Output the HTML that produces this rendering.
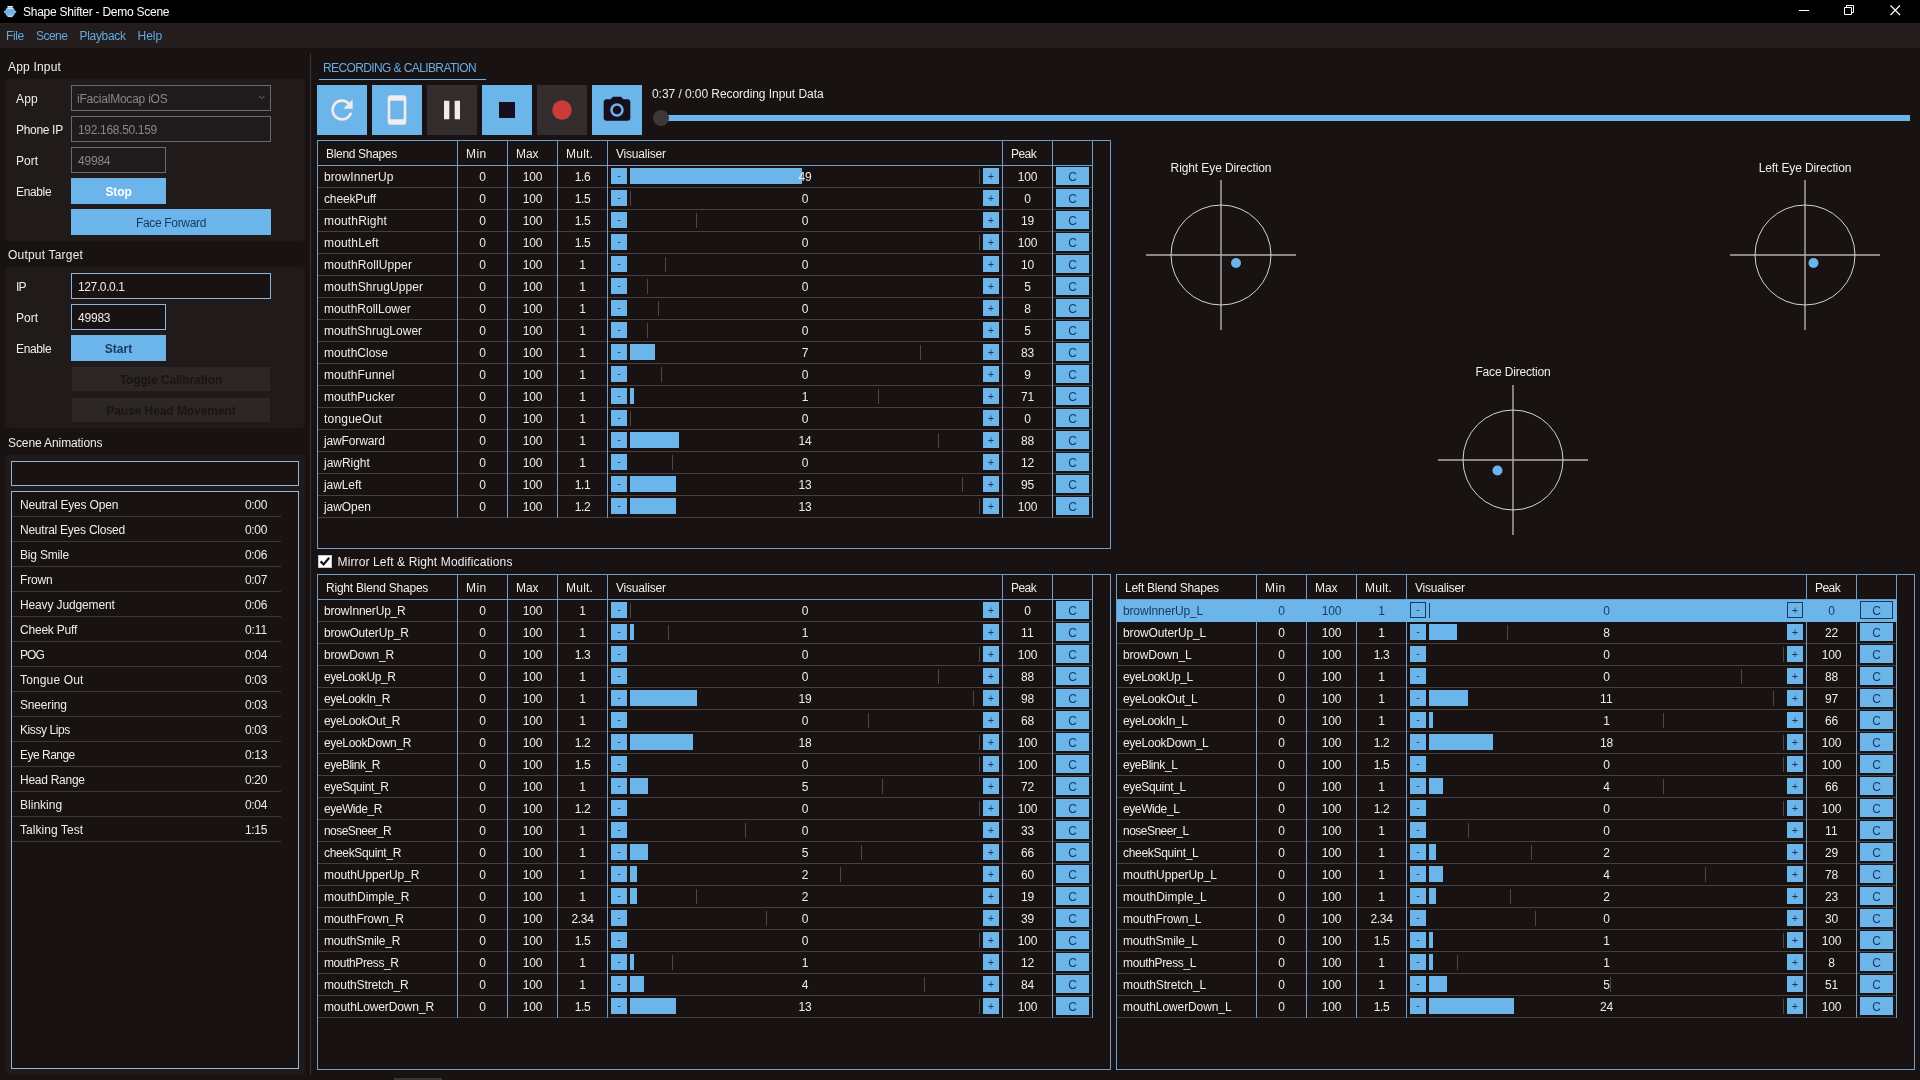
<!DOCTYPE html>
<html lang="en"><head><meta charset="utf-8"><title>Shape Shifter - Demo Scene</title>
<style>

html,body{margin:0;padding:0;}
body{width:1920px;height:1080px;overflow:hidden;background:#181212;color:#f1ecec;
 font-family:"Liberation Sans",sans-serif;font-size:12px;position:relative;}
div,span,svg{position:absolute;box-sizing:border-box;}
.x{white-space:nowrap;line-height:16px;height:16px;}
.g{background:#201a1a;border-radius:5px;}
.b{background:#6cb5ea;}
.nv{color:#17395f;}
.bd{font-weight:bold;}
.in{border:1px solid #8fb6d8;background:#181212;}
.ind{border:1px solid #626c78;background:#201a1a;}
.gt{color:#8b8686;}
.tb{border:1px solid #6e9fca;}
.cl{width:1px;background:#6e9fca;top:0;}
.hl{height:1px;background:#6e9fca;left:0;}
.r{left:0;height:22px;border-bottom:1px solid #453f3f;}
.r .x{top:3px;}
.n{left:6px;}
.ce{text-align:center;}
.k{top:2px;width:16px;height:16px;background:#6cb5ea;color:#17395f;text-align:center;line-height:15px;font-size:11px;}
.cb{top:1px;width:33px;height:18px;background:#6cb5ea;color:#17395f;text-align:center;line-height:20px;}
.kp{line-height:17px;}
.f{top:2px;height:16px;background:#6cb5ea;}
.pk{top:3px;width:1px;height:15px;background:#4c4646;}
.sel{background:#6cb5ea;color:#17395f;border-bottom-color:#6cb5ea;}
.sel .k,.sel .cb{border:1px solid #17395f;line-height:13px;}
.sel .cb{line-height:18px;}
.sel .kp{line-height:15px;}
.sel .pk{background:#17395f;}
.sr{left:0;width:269px;height:25px;border-bottom:1px solid #3d3737;}

</style></head><body>
<div id="app" style="left:0;top:0;width:1920px;height:1080px;will-change:transform">
<div style="left:0px;top:0px;width:1920px;height:23px;background:#000"></div>
<svg style="left:3px;top:5px" width="15" height="13" viewBox="3 5 15 13"><circle cx="5" cy="11.8" r="1.1" fill="#9fc4e2"/><circle cx="15.2" cy="11.8" r="1.1" fill="#9fc4e2"/><ellipse cx="10.1" cy="11.9" rx="5" ry="5.3" fill="#7cb6e2"/><rect x="7.2" y="5.9" width="5.8" height="1.4" rx="0.6" fill="#e6eef5"/><rect x="7.6" y="8" width="5" height="1" rx="0.5" fill="#cfe4f3"/><circle cx="7.9" cy="11.6" r="0.7" fill="#4d86b6"/><circle cx="11.9" cy="11.6" r="0.7" fill="#4d86b6"/><ellipse cx="10.1" cy="16.2" rx="2.6" ry="0.9" fill="#b4d2ea"/></svg>
<span class="x" style="left:23px;top:3.5px;letter-spacing:-0.25px;color:#fff">Shape Shifter - Demo Scene</span>
<svg style="left:1790px;top:0" width="130" height="23" viewBox="0 0 130 23" fill="none" stroke="#fff" stroke-width="1"><path d="M9 10.5h10"/><path d="M54.5 7.5h7v7h-7z"/><path d="M56.5 7.5v-2h7v7h-2"/><path d="M100.5 5.5l9.5 9.5M110 5.5l-9.5 9.5" stroke-width="1.2"/></svg>
<div style="left:0px;top:23px;width:1920px;height:25px;background:#231d1d"></div>
<span class="x" style="left:6px;top:27.5px;letter-spacing:-0.35px;color:#64a9de">File</span>
<span class="x" style="left:36px;top:27.5px;letter-spacing:-0.55px;color:#64a9de">Scene</span>
<span class="x" style="left:79.5px;top:27.5px;letter-spacing:-0.32px;color:#64a9de">Playback</span>
<span class="x" style="left:137.5px;top:27.5px;color:#64a9de">Help</span>
<span class="x" style="left:8px;top:58.5px;letter-spacing:0.18px;">App Input</span>
<div class="g" style="left:5px;top:79px;width:300px;height:162px;"></div>
<span class="x" style="left:16px;top:91px;letter-spacing:0.17px;">App</span>
<span class="x" style="left:16px;top:121.5px;letter-spacing:-0.32px;">Phone IP</span>
<span class="x" style="left:16px;top:152.5px;">Port</span>
<span class="x" style="left:16px;top:183.5px;letter-spacing:-0.36px;">Enable</span>
<div class="ind" style="left:71px;top:85px;width:200px;height:26px;"></div>
<span class="x gt" style="left:77px;top:90.5px;letter-spacing:-0.22px;">iFacialMocap iOS</span>
<svg style="left:258px;top:94px" width="8" height="6" viewBox="0 0 8 6" fill="none" stroke="#807a7a" stroke-width="0.9"><path d="M1.2 1.8l2.7 2.7 2.7-2.7"/></svg>
<div class="ind" style="left:71px;top:116px;width:200px;height:26px;"></div>
<span class="x gt" style="left:78px;top:121.5px;letter-spacing:-0.32px;">192.168.50.159</span>
<div class="ind" style="left:71px;top:147px;width:95px;height:26px;"></div>
<span class="x gt" style="left:78px;top:152.5px;letter-spacing:-0.21px;">49984</span>
<div class="b" style="left:71px;top:178px;width:95px;height:26px;"></div>
<span class="x bd" style="left:-31.5px;width:300px;text-align:center;top:183.5px;letter-spacing:-0.12px;color:#fff">Stop</span>
<div class="b" style="left:71px;top:209px;width:200px;height:26px;"></div>
<span class="x nv" style="left:21px;width:300px;text-align:center;top:214.5px;letter-spacing:-0.32px;">Face Forward</span>
<span class="x" style="left:8px;top:246.5px;letter-spacing:0.20px;">Output Target</span>
<div class="g" style="left:5px;top:267px;width:300px;height:161px;"></div>
<span class="x" style="left:16px;top:278.5px;letter-spacing:-0.71px;">IP</span>
<span class="x" style="left:16px;top:309.5px;">Port</span>
<span class="x" style="left:16px;top:340.5px;letter-spacing:-0.36px;">Enable</span>
<div class="in" style="left:71px;top:273px;width:200px;height:26px;"></div>
<span class="x" style="left:78px;top:278.5px;letter-spacing:-0.38px;">127.0.0.1</span>
<div class="in" style="left:71px;top:304px;width:95px;height:26px;"></div>
<span class="x" style="left:78px;top:309.5px;letter-spacing:-0.21px;">49983</span>
<div class="b" style="left:71px;top:335px;width:95px;height:26px;"></div>
<span class="x nv bd" style="left:-31.5px;width:300px;text-align:center;top:340.5px;letter-spacing:0.03px;">Start</span>
<div style="left:72px;top:367px;width:198px;height:24px;background:#2c2626"></div>
<span class="x bd" style="left:21px;width:300px;text-align:center;top:371.5px;letter-spacing:-0.11px;color:#1a1414">Toggle Calibration</span>
<div style="left:72px;top:398px;width:198px;height:24px;background:#2c2626"></div>
<span class="x bd" style="left:21px;width:300px;text-align:center;top:402.5px;letter-spacing:-0.06px;color:#1a1414">Pause Head Movement</span>
<span class="x" style="left:8px;top:434.5px;letter-spacing:-0.10px;">Scene Animations</span>
<div class="g" style="left:5px;top:455px;width:300px;height:620px;"></div>
<div class="in" style="left:11px;top:461px;width:288px;height:25px;"></div>
<div class="in" style="left:11px;top:491px;width:288px;height:578px">
<div class="sr" style="top:0px"><span class="x" style="left:8px;top:5px;letter-spacing:-0.19px;">Neutral Eyes Open</span><span class="x" style="left:233px;top:5px;letter-spacing:-0.34px;">0:00</span></div>
<div class="sr" style="top:25px"><span class="x" style="left:8px;top:5px;letter-spacing:-0.24px;">Neutral Eyes Closed</span><span class="x" style="left:233px;top:5px;letter-spacing:-0.34px;">0:00</span></div>
<div class="sr" style="top:50px"><span class="x" style="left:8px;top:5px;letter-spacing:-0.19px;">Big Smile</span><span class="x" style="left:233px;top:5px;letter-spacing:-0.34px;">0:06</span></div>
<div class="sr" style="top:75px"><span class="x" style="left:8px;top:5px;letter-spacing:-0.16px;">Frown</span><span class="x" style="left:233px;top:5px;letter-spacing:-0.34px;">0:07</span></div>
<div class="sr" style="top:100px"><span class="x" style="left:8px;top:5px;letter-spacing:-0.13px;">Heavy Judgement</span><span class="x" style="left:233px;top:5px;letter-spacing:-0.34px;">0:06</span></div>
<div class="sr" style="top:125px"><span class="x" style="left:8px;top:5px;letter-spacing:-0.21px;">Cheek Puff</span><span class="x" style="left:233px;top:5px;letter-spacing:-0.11px;">0:11</span></div>
<div class="sr" style="top:150px"><span class="x" style="left:8px;top:5px;letter-spacing:-0.89px;">POG</span><span class="x" style="left:233px;top:5px;letter-spacing:-0.34px;">0:04</span></div>
<div class="sr" style="top:175px"><span class="x" style="left:8px;top:5px;letter-spacing:0.14px;">Tongue Out</span><span class="x" style="left:233px;top:5px;letter-spacing:-0.34px;">0:03</span></div>
<div class="sr" style="top:200px"><span class="x" style="left:8px;top:5px;letter-spacing:-0.17px;">Sneering</span><span class="x" style="left:233px;top:5px;letter-spacing:-0.34px;">0:03</span></div>
<div class="sr" style="top:225px"><span class="x" style="left:8px;top:5px;letter-spacing:-0.42px;">Kissy Lips</span><span class="x" style="left:233px;top:5px;letter-spacing:-0.34px;">0:03</span></div>
<div class="sr" style="top:250px"><span class="x" style="left:8px;top:5px;letter-spacing:-0.51px;">Eye Range</span><span class="x" style="left:233px;top:5px;letter-spacing:-0.34px;">0:13</span></div>
<div class="sr" style="top:275px"><span class="x" style="left:8px;top:5px;letter-spacing:-0.27px;">Head Range</span><span class="x" style="left:233px;top:5px;letter-spacing:-0.34px;">0:20</span></div>
<div class="sr" style="top:300px"><span class="x" style="left:8px;top:5px;letter-spacing:0.02px;">Blinking</span><span class="x" style="left:233px;top:5px;letter-spacing:-0.34px;">0:04</span></div>
<div class="sr" style="top:325px"><span class="x" style="left:8px;top:5px;letter-spacing:0.05px;">Talking Test</span><span class="x" style="left:233px;top:5px;letter-spacing:-0.34px;">1:15</span></div>
</div>
<div style="left:310px;top:53px;width:1px;height:1022px;background:#3a3434"></div>
<div style="left:394px;top:1078px;width:48px;height:2px;background:#3a3535"></div>
<span class="x" style="left:323px;top:59.5px;letter-spacing:-0.61px;color:#68aee2">RECORDING &amp; CALIBRATION</span>
<div style="left:319px;top:79px;width:167px;height:1px;background:#6cb5ea"></div>
<div style="left:317px;top:85px;width:50px;height:50px;background:#6cb5ea"><svg style="left:9px;top:9px" width="32" height="32" viewBox="0 0 24 24"><path fill="#f1ebeb" d="M17.65 6.35C16.2 4.9 14.21 4 12 4c-4.42 0-7.99 3.58-7.99 8s3.57 8 7.99 8c3.73 0 6.84-2.55 7.73-6h-2.08c-.82 2.33-3.04 4-5.65 4-3.31 0-6-2.69-6-6s2.69-6 6-6c1.66 0 3.14.69 4.22 1.78L13 11h7V4l-2.35 2.35z"/></svg></div>
<div style="left:372px;top:85px;width:50px;height:50px;background:#6cb5ea"><svg style="left:9px;top:9px" width="32" height="32" viewBox="0 0 24 24"><path fill="#f1ebeb" d="M17 1.01L7 1c-1.1 0-2 .9-2 2v18c0 1.1.9 2 2 2h10c1.1 0 2-.9 2-2V3c0-1.1-.9-1.99-2-1.99zM17 19H7V5h10v14z"/></svg></div>
<div style="left:427px;top:85px;width:50px;height:50px;background:#332d2d"><svg style="left:9px;top:9px" width="32" height="32" viewBox="0 0 24 24"><path fill="#f1ebeb" d="M6 19h4V5H6v14zm8-14v14h4V5h-4z"/></svg></div>
<div style="left:482px;top:85px;width:50px;height:50px;background:#6cb5ea"><svg style="left:9px;top:9px" width="32" height="32" viewBox="0 0 24 24"><path fill="#160e1c" d="M6 6h12v12H6z"/></svg></div>
<div style="left:537px;top:85px;width:50px;height:50px;background:#332d2d"><svg style="left:9px;top:9px" width="32" height="32" viewBox="0 0 24 24"><circle cx="12" cy="12" r="7.3" fill="#c83c3c"/></svg></div>
<div style="left:592px;top:85px;width:50px;height:50px;background:#6cb5ea"><svg style="left:9px;top:9px" width="32" height="32" viewBox="0 0 24 24"><circle cx="12" cy="12" r="3.2" fill="#160e1c"/><path fill="#160e1c" d="M9 2L7.17 4H4c-1.1 0-2 .9-2 2v12c0 1.1.9 2 2 2h16c1.1 0 2-.9 2-2V6c0-1.1-.9-2-2-2h-3.17L15 2H9zm3 15c-2.76 0-5-2.24-5-5s2.24-5 5-5 5 2.24 5 5-2.24 5-5 5z"/></svg></div>
<span class="x" style="left:652px;top:85.5px;letter-spacing:-0.06px;">0:37 / 0:00 Recording Input Data</span>
<div style="left:661px;top:115px;width:1249px;height:6px;background:#6cb5ea"></div>
<div style="left:653px;top:110px;width:16px;height:16px;background:#3d3737;border-radius:8px"></div>
<div class="tb" style="left:317px;top:140px;width:794px;height:409px">
<span class="x" style="left:8px;top:5px;letter-spacing:-0.32px;">Blend Shapes</span>
<span class="x" style="left:148px;top:5px;letter-spacing:0.38px;">Min</span>
<span class="x" style="left:198px;top:5px;letter-spacing:-0.09px;">Max</span>
<span class="x" style="left:248px;top:5px;letter-spacing:0.23px;">Mult.</span>
<span class="x" style="left:298px;top:5px;letter-spacing:-0.21px;">Visualiser</span>
<span class="x" style="left:693px;top:5px;letter-spacing:-0.57px;">Peak</span>
<div class="r" style="top:25px;width:775px">
<span class="x n" style="letter-spacing:0.07px;">browInnerUp</span>
<span class="x ce" style="left:140px;width:49px;letter-spacing:-0.21px;">0</span>
<span class="x ce" style="left:190px;width:49px;letter-spacing:-0.21px;">100</span>
<span class="x ce" style="left:240px;width:49px;letter-spacing:-0.38px;">1.6</span>
<div class="k" style="left:293px">-</div>
<div class="f" style="left:312px;width:172px"></div>
<div class="pk" style="left:661px"></div>
<span class="x ce" style="left:312px;width:350px;letter-spacing:-0.21px;">49</span>
<div class="k kp" style="left:665px">+</div>
<span class="x ce" style="left:685px;width:49px;letter-spacing:-0.21px;">100</span>
<div class="cb" style="left:738px">C</div>
</div>
<div class="r" style="top:47px;width:775px">
<span class="x n" style="letter-spacing:-0.14px;">cheekPuff</span>
<span class="x ce" style="left:140px;width:49px;letter-spacing:-0.21px;">0</span>
<span class="x ce" style="left:190px;width:49px;letter-spacing:-0.21px;">100</span>
<span class="x ce" style="left:240px;width:49px;letter-spacing:-0.38px;">1.5</span>
<div class="k" style="left:293px">-</div>
<div class="pk" style="left:312px"></div>
<span class="x ce" style="left:312px;width:350px;letter-spacing:-0.21px;">0</span>
<div class="k kp" style="left:665px">+</div>
<span class="x ce" style="left:685px;width:49px;letter-spacing:-0.21px;">0</span>
<div class="cb" style="left:738px">C</div>
</div>
<div class="r" style="top:69px;width:775px">
<span class="x n" style="letter-spacing:0.17px;">mouthRight</span>
<span class="x ce" style="left:140px;width:49px;letter-spacing:-0.21px;">0</span>
<span class="x ce" style="left:190px;width:49px;letter-spacing:-0.21px;">100</span>
<span class="x ce" style="left:240px;width:49px;letter-spacing:-0.38px;">1.5</span>
<div class="k" style="left:293px">-</div>
<div class="pk" style="left:378px"></div>
<span class="x ce" style="left:312px;width:350px;letter-spacing:-0.21px;">0</span>
<div class="k kp" style="left:665px">+</div>
<span class="x ce" style="left:685px;width:49px;letter-spacing:-0.21px;">19</span>
<div class="cb" style="left:738px">C</div>
</div>
<div class="r" style="top:91px;width:775px">
<span class="x n" style="letter-spacing:0.16px;">mouthLeft</span>
<span class="x ce" style="left:140px;width:49px;letter-spacing:-0.21px;">0</span>
<span class="x ce" style="left:190px;width:49px;letter-spacing:-0.21px;">100</span>
<span class="x ce" style="left:240px;width:49px;letter-spacing:-0.38px;">1.5</span>
<div class="k" style="left:293px">-</div>
<div class="pk" style="left:661px"></div>
<span class="x ce" style="left:312px;width:350px;letter-spacing:-0.21px;">0</span>
<div class="k kp" style="left:665px">+</div>
<span class="x ce" style="left:685px;width:49px;letter-spacing:-0.21px;">100</span>
<div class="cb" style="left:738px">C</div>
</div>
<div class="r" style="top:113px;width:775px">
<span class="x n" style="letter-spacing:0.09px;">mouthRollUpper</span>
<span class="x ce" style="left:140px;width:49px;letter-spacing:-0.21px;">0</span>
<span class="x ce" style="left:190px;width:49px;letter-spacing:-0.21px;">100</span>
<span class="x ce" style="left:240px;width:49px;letter-spacing:-0.21px;">1</span>
<div class="k" style="left:293px">-</div>
<div class="pk" style="left:347px"></div>
<span class="x ce" style="left:312px;width:350px;letter-spacing:-0.21px;">0</span>
<div class="k kp" style="left:665px">+</div>
<span class="x ce" style="left:685px;width:49px;letter-spacing:-0.21px;">10</span>
<div class="cb" style="left:738px">C</div>
</div>
<div class="r" style="top:135px;width:775px">
<span class="x n" style="letter-spacing:0.07px;">mouthShrugUpper</span>
<span class="x ce" style="left:140px;width:49px;letter-spacing:-0.21px;">0</span>
<span class="x ce" style="left:190px;width:49px;letter-spacing:-0.21px;">100</span>
<span class="x ce" style="left:240px;width:49px;letter-spacing:-0.21px;">1</span>
<div class="k" style="left:293px">-</div>
<div class="pk" style="left:329px"></div>
<span class="x ce" style="left:312px;width:350px;letter-spacing:-0.21px;">0</span>
<div class="k kp" style="left:665px">+</div>
<span class="x ce" style="left:685px;width:49px;letter-spacing:-0.21px;">5</span>
<div class="cb" style="left:738px">C</div>
</div>
<div class="r" style="top:157px;width:775px">
<span class="x n" style="">mouthRollLower</span>
<span class="x ce" style="left:140px;width:49px;letter-spacing:-0.21px;">0</span>
<span class="x ce" style="left:190px;width:49px;letter-spacing:-0.21px;">100</span>
<span class="x ce" style="left:240px;width:49px;letter-spacing:-0.21px;">1</span>
<div class="k" style="left:293px">-</div>
<div class="pk" style="left:340px"></div>
<span class="x ce" style="left:312px;width:350px;letter-spacing:-0.21px;">0</span>
<div class="k kp" style="left:665px">+</div>
<span class="x ce" style="left:685px;width:49px;letter-spacing:-0.21px;">8</span>
<div class="cb" style="left:738px">C</div>
</div>
<div class="r" style="top:179px;width:775px">
<span class="x n" style="">mouthShrugLower</span>
<span class="x ce" style="left:140px;width:49px;letter-spacing:-0.21px;">0</span>
<span class="x ce" style="left:190px;width:49px;letter-spacing:-0.21px;">100</span>
<span class="x ce" style="left:240px;width:49px;letter-spacing:-0.21px;">1</span>
<div class="k" style="left:293px">-</div>
<div class="pk" style="left:329px"></div>
<span class="x ce" style="left:312px;width:350px;letter-spacing:-0.21px;">0</span>
<div class="k kp" style="left:665px">+</div>
<span class="x ce" style="left:685px;width:49px;letter-spacing:-0.21px;">5</span>
<div class="cb" style="left:738px">C</div>
</div>
<div class="r" style="top:201px;width:775px">
<span class="x n" style="">mouthClose</span>
<span class="x ce" style="left:140px;width:49px;letter-spacing:-0.21px;">0</span>
<span class="x ce" style="left:190px;width:49px;letter-spacing:-0.21px;">100</span>
<span class="x ce" style="left:240px;width:49px;letter-spacing:-0.21px;">1</span>
<div class="k" style="left:293px">-</div>
<div class="f" style="left:312px;width:25px"></div>
<div class="pk" style="left:602px"></div>
<span class="x ce" style="left:312px;width:350px;letter-spacing:-0.21px;">7</span>
<div class="k kp" style="left:665px">+</div>
<span class="x ce" style="left:685px;width:49px;letter-spacing:-0.21px;">83</span>
<div class="cb" style="left:738px">C</div>
</div>
<div class="r" style="top:223px;width:775px">
<span class="x n" style="letter-spacing:0.04px;">mouthFunnel</span>
<span class="x ce" style="left:140px;width:49px;letter-spacing:-0.21px;">0</span>
<span class="x ce" style="left:190px;width:49px;letter-spacing:-0.21px;">100</span>
<span class="x ce" style="left:240px;width:49px;letter-spacing:-0.21px;">1</span>
<div class="k" style="left:293px">-</div>
<div class="pk" style="left:343px"></div>
<span class="x ce" style="left:312px;width:350px;letter-spacing:-0.21px;">0</span>
<div class="k kp" style="left:665px">+</div>
<span class="x ce" style="left:685px;width:49px;letter-spacing:-0.21px;">9</span>
<div class="cb" style="left:738px">C</div>
</div>
<div class="r" style="top:245px;width:775px">
<span class="x n" style="">mouthPucker</span>
<span class="x ce" style="left:140px;width:49px;letter-spacing:-0.21px;">0</span>
<span class="x ce" style="left:190px;width:49px;letter-spacing:-0.21px;">100</span>
<span class="x ce" style="left:240px;width:49px;letter-spacing:-0.21px;">1</span>
<div class="k" style="left:293px">-</div>
<div class="f" style="left:312px;width:4px"></div>
<div class="pk" style="left:560px"></div>
<span class="x ce" style="left:312px;width:350px;letter-spacing:-0.21px;">1</span>
<div class="k kp" style="left:665px">+</div>
<span class="x ce" style="left:685px;width:49px;letter-spacing:-0.21px;">71</span>
<div class="cb" style="left:738px">C</div>
</div>
<div class="r" style="top:267px;width:775px">
<span class="x n" style="letter-spacing:0.21px;">tongueOut</span>
<span class="x ce" style="left:140px;width:49px;letter-spacing:-0.21px;">0</span>
<span class="x ce" style="left:190px;width:49px;letter-spacing:-0.21px;">100</span>
<span class="x ce" style="left:240px;width:49px;letter-spacing:-0.21px;">1</span>
<div class="k" style="left:293px">-</div>
<div class="pk" style="left:312px"></div>
<span class="x ce" style="left:312px;width:350px;letter-spacing:-0.21px;">0</span>
<div class="k kp" style="left:665px">+</div>
<span class="x ce" style="left:685px;width:49px;letter-spacing:-0.21px;">0</span>
<div class="cb" style="left:738px">C</div>
</div>
<div class="r" style="top:289px;width:775px">
<span class="x n" style="letter-spacing:-0.13px;">jawForward</span>
<span class="x ce" style="left:140px;width:49px;letter-spacing:-0.21px;">0</span>
<span class="x ce" style="left:190px;width:49px;letter-spacing:-0.21px;">100</span>
<span class="x ce" style="left:240px;width:49px;letter-spacing:-0.21px;">1</span>
<div class="k" style="left:293px">-</div>
<div class="f" style="left:312px;width:49px"></div>
<div class="pk" style="left:620px"></div>
<span class="x ce" style="left:312px;width:350px;letter-spacing:-0.21px;">14</span>
<div class="k kp" style="left:665px">+</div>
<span class="x ce" style="left:685px;width:49px;letter-spacing:-0.21px;">88</span>
<div class="cb" style="left:738px">C</div>
</div>
<div class="r" style="top:311px;width:775px">
<span class="x n" style="letter-spacing:-0.04px;">jawRight</span>
<span class="x ce" style="left:140px;width:49px;letter-spacing:-0.21px;">0</span>
<span class="x ce" style="left:190px;width:49px;letter-spacing:-0.21px;">100</span>
<span class="x ce" style="left:240px;width:49px;letter-spacing:-0.21px;">1</span>
<div class="k" style="left:293px">-</div>
<div class="pk" style="left:354px"></div>
<span class="x ce" style="left:312px;width:350px;letter-spacing:-0.21px;">0</span>
<div class="k kp" style="left:665px">+</div>
<span class="x ce" style="left:685px;width:49px;letter-spacing:-0.21px;">12</span>
<div class="cb" style="left:738px">C</div>
</div>
<div class="r" style="top:333px;width:775px">
<span class="x n" style="letter-spacing:-0.09px;">jawLeft</span>
<span class="x ce" style="left:140px;width:49px;letter-spacing:-0.21px;">0</span>
<span class="x ce" style="left:190px;width:49px;letter-spacing:-0.21px;">100</span>
<span class="x ce" style="left:240px;width:49px;letter-spacing:-0.38px;">1.1</span>
<div class="k" style="left:293px">-</div>
<div class="f" style="left:312px;width:46px"></div>
<div class="pk" style="left:644px"></div>
<span class="x ce" style="left:312px;width:350px;letter-spacing:-0.21px;">13</span>
<div class="k kp" style="left:665px">+</div>
<span class="x ce" style="left:685px;width:49px;letter-spacing:-0.21px;">95</span>
<div class="cb" style="left:738px">C</div>
</div>
<div class="r" style="top:355px;width:775px">
<span class="x n" style="letter-spacing:-0.07px;">jawOpen</span>
<span class="x ce" style="left:140px;width:49px;letter-spacing:-0.21px;">0</span>
<span class="x ce" style="left:190px;width:49px;letter-spacing:-0.21px;">100</span>
<span class="x ce" style="left:240px;width:49px;letter-spacing:-0.38px;">1.2</span>
<div class="k" style="left:293px">-</div>
<div class="f" style="left:312px;width:46px"></div>
<div class="pk" style="left:661px"></div>
<span class="x ce" style="left:312px;width:350px;letter-spacing:-0.21px;">13</span>
<div class="k kp" style="left:665px">+</div>
<span class="x ce" style="left:685px;width:49px;letter-spacing:-0.21px;">100</span>
<div class="cb" style="left:738px">C</div>
</div>
<div class="hl" style="top:24px;width:775px"></div>
<div class="cl" style="left:139px;height:377px"></div>
<div class="cl" style="left:189px;height:377px"></div>
<div class="cl" style="left:239px;height:377px"></div>
<div class="cl" style="left:289px;height:377px"></div>
<div class="cl" style="left:684px;height:377px"></div>
<div class="cl" style="left:734px;height:377px"></div>
<div class="cl" style="left:774px;height:377px"></div>
</div>
<div style="left:318px;top:555px;width:14px;height:13px;background:#fff;border:1px solid #c8c8c8"><svg style="left:0;top:0" width="12" height="11" viewBox="0 0 12 11" fill="none" stroke="#111" stroke-width="2.2"><path d="M1.6 5.4l3 3 5.6-6.6"/></svg></div>
<span class="x" style="left:337.5px;top:553.5px;letter-spacing:0.13px;">Mirror Left &amp; Right Modifications</span>
<div class="tb" style="left:317px;top:574px;width:794px;height:496px">
<span class="x" style="left:8px;top:5px;letter-spacing:-0.22px;">Right Blend Shapes</span>
<span class="x" style="left:148px;top:5px;letter-spacing:0.38px;">Min</span>
<span class="x" style="left:198px;top:5px;letter-spacing:-0.09px;">Max</span>
<span class="x" style="left:248px;top:5px;letter-spacing:0.23px;">Mult.</span>
<span class="x" style="left:298px;top:5px;letter-spacing:-0.21px;">Visualiser</span>
<span class="x" style="left:693px;top:5px;letter-spacing:-0.57px;">Peak</span>
<div class="r" style="top:25px;width:775px">
<span class="x n" style="letter-spacing:-0.19px;">browInnerUp_R</span>
<span class="x ce" style="left:140px;width:49px;letter-spacing:-0.21px;">0</span>
<span class="x ce" style="left:190px;width:49px;letter-spacing:-0.21px;">100</span>
<span class="x ce" style="left:240px;width:49px;letter-spacing:-0.21px;">1</span>
<div class="k" style="left:293px">-</div>
<div class="pk" style="left:312px"></div>
<span class="x ce" style="left:312px;width:350px;letter-spacing:-0.21px;">0</span>
<div class="k kp" style="left:665px">+</div>
<span class="x ce" style="left:685px;width:49px;letter-spacing:-0.21px;">0</span>
<div class="cb" style="left:738px">C</div>
</div>
<div class="r" style="top:47px;width:775px">
<span class="x n" style="letter-spacing:-0.15px;">browOuterUp_R</span>
<span class="x ce" style="left:140px;width:49px;letter-spacing:-0.21px;">0</span>
<span class="x ce" style="left:190px;width:49px;letter-spacing:-0.21px;">100</span>
<span class="x ce" style="left:240px;width:49px;letter-spacing:-0.21px;">1</span>
<div class="k" style="left:293px">-</div>
<div class="f" style="left:312px;width:4px"></div>
<div class="pk" style="left:350px"></div>
<span class="x ce" style="left:312px;width:350px;letter-spacing:-0.21px;">1</span>
<div class="k kp" style="left:665px">+</div>
<span class="x ce" style="left:685px;width:49px;letter-spacing:0.24px;">11</span>
<div class="cb" style="left:738px">C</div>
</div>
<div class="r" style="top:69px;width:775px">
<span class="x n" style="letter-spacing:-0.20px;">browDown_R</span>
<span class="x ce" style="left:140px;width:49px;letter-spacing:-0.21px;">0</span>
<span class="x ce" style="left:190px;width:49px;letter-spacing:-0.21px;">100</span>
<span class="x ce" style="left:240px;width:49px;letter-spacing:-0.38px;">1.3</span>
<div class="k" style="left:293px">-</div>
<div class="pk" style="left:661px"></div>
<span class="x ce" style="left:312px;width:350px;letter-spacing:-0.21px;">0</span>
<div class="k kp" style="left:665px">+</div>
<span class="x ce" style="left:685px;width:49px;letter-spacing:-0.21px;">100</span>
<div class="cb" style="left:738px">C</div>
</div>
<div class="r" style="top:91px;width:775px">
<span class="x n" style="letter-spacing:-0.42px;">eyeLookUp_R</span>
<span class="x ce" style="left:140px;width:49px;letter-spacing:-0.21px;">0</span>
<span class="x ce" style="left:190px;width:49px;letter-spacing:-0.21px;">100</span>
<span class="x ce" style="left:240px;width:49px;letter-spacing:-0.21px;">1</span>
<div class="k" style="left:293px">-</div>
<div class="pk" style="left:620px"></div>
<span class="x ce" style="left:312px;width:350px;letter-spacing:-0.21px;">0</span>
<div class="k kp" style="left:665px">+</div>
<span class="x ce" style="left:685px;width:49px;letter-spacing:-0.21px;">88</span>
<div class="cb" style="left:738px">C</div>
</div>
<div class="r" style="top:113px;width:775px">
<span class="x n" style="letter-spacing:-0.42px;">eyeLookIn_R</span>
<span class="x ce" style="left:140px;width:49px;letter-spacing:-0.21px;">0</span>
<span class="x ce" style="left:190px;width:49px;letter-spacing:-0.21px;">100</span>
<span class="x ce" style="left:240px;width:49px;letter-spacing:-0.21px;">1</span>
<div class="k" style="left:293px">-</div>
<div class="f" style="left:312px;width:67px"></div>
<div class="pk" style="left:655px"></div>
<span class="x ce" style="left:312px;width:350px;letter-spacing:-0.21px;">19</span>
<div class="k kp" style="left:665px">+</div>
<span class="x ce" style="left:685px;width:49px;letter-spacing:-0.21px;">98</span>
<div class="cb" style="left:738px">C</div>
</div>
<div class="r" style="top:135px;width:775px">
<span class="x n" style="letter-spacing:-0.33px;">eyeLookOut_R</span>
<span class="x ce" style="left:140px;width:49px;letter-spacing:-0.21px;">0</span>
<span class="x ce" style="left:190px;width:49px;letter-spacing:-0.21px;">100</span>
<span class="x ce" style="left:240px;width:49px;letter-spacing:-0.21px;">1</span>
<div class="k" style="left:293px">-</div>
<div class="pk" style="left:550px"></div>
<span class="x ce" style="left:312px;width:350px;letter-spacing:-0.21px;">0</span>
<div class="k kp" style="left:665px">+</div>
<span class="x ce" style="left:685px;width:49px;letter-spacing:-0.21px;">68</span>
<div class="cb" style="left:738px">C</div>
</div>
<div class="r" style="top:157px;width:775px">
<span class="x n" style="letter-spacing:-0.33px;">eyeLookDown_R</span>
<span class="x ce" style="left:140px;width:49px;letter-spacing:-0.21px;">0</span>
<span class="x ce" style="left:190px;width:49px;letter-spacing:-0.21px;">100</span>
<span class="x ce" style="left:240px;width:49px;letter-spacing:-0.38px;">1.2</span>
<div class="k" style="left:293px">-</div>
<div class="f" style="left:312px;width:63px"></div>
<div class="pk" style="left:661px"></div>
<span class="x ce" style="left:312px;width:350px;letter-spacing:-0.21px;">18</span>
<div class="k kp" style="left:665px">+</div>
<span class="x ce" style="left:685px;width:49px;letter-spacing:-0.21px;">100</span>
<div class="cb" style="left:738px">C</div>
</div>
<div class="r" style="top:179px;width:775px">
<span class="x n" style="letter-spacing:-0.48px;">eyeBlink_R</span>
<span class="x ce" style="left:140px;width:49px;letter-spacing:-0.21px;">0</span>
<span class="x ce" style="left:190px;width:49px;letter-spacing:-0.21px;">100</span>
<span class="x ce" style="left:240px;width:49px;letter-spacing:-0.38px;">1.5</span>
<div class="k" style="left:293px">-</div>
<div class="pk" style="left:661px"></div>
<span class="x ce" style="left:312px;width:350px;letter-spacing:-0.21px;">0</span>
<div class="k kp" style="left:665px">+</div>
<span class="x ce" style="left:685px;width:49px;letter-spacing:-0.21px;">100</span>
<div class="cb" style="left:738px">C</div>
</div>
<div class="r" style="top:201px;width:775px">
<span class="x n" style="letter-spacing:-0.39px;">eyeSquint_R</span>
<span class="x ce" style="left:140px;width:49px;letter-spacing:-0.21px;">0</span>
<span class="x ce" style="left:190px;width:49px;letter-spacing:-0.21px;">100</span>
<span class="x ce" style="left:240px;width:49px;letter-spacing:-0.21px;">1</span>
<div class="k" style="left:293px">-</div>
<div class="f" style="left:312px;width:18px"></div>
<div class="pk" style="left:564px"></div>
<span class="x ce" style="left:312px;width:350px;letter-spacing:-0.21px;">5</span>
<div class="k kp" style="left:665px">+</div>
<span class="x ce" style="left:685px;width:49px;letter-spacing:-0.21px;">72</span>
<div class="cb" style="left:738px">C</div>
</div>
<div class="r" style="top:223px;width:775px">
<span class="x n" style="letter-spacing:-0.45px;">eyeWide_R</span>
<span class="x ce" style="left:140px;width:49px;letter-spacing:-0.21px;">0</span>
<span class="x ce" style="left:190px;width:49px;letter-spacing:-0.21px;">100</span>
<span class="x ce" style="left:240px;width:49px;letter-spacing:-0.38px;">1.2</span>
<div class="k" style="left:293px">-</div>
<div class="pk" style="left:661px"></div>
<span class="x ce" style="left:312px;width:350px;letter-spacing:-0.21px;">0</span>
<div class="k kp" style="left:665px">+</div>
<span class="x ce" style="left:685px;width:49px;letter-spacing:-0.21px;">100</span>
<div class="cb" style="left:738px">C</div>
</div>
<div class="r" style="top:245px;width:775px">
<span class="x n" style="letter-spacing:-0.56px;">noseSneer_R</span>
<span class="x ce" style="left:140px;width:49px;letter-spacing:-0.21px;">0</span>
<span class="x ce" style="left:190px;width:49px;letter-spacing:-0.21px;">100</span>
<span class="x ce" style="left:240px;width:49px;letter-spacing:-0.21px;">1</span>
<div class="k" style="left:293px">-</div>
<div class="pk" style="left:427px"></div>
<span class="x ce" style="left:312px;width:350px;letter-spacing:-0.21px;">0</span>
<div class="k kp" style="left:665px">+</div>
<span class="x ce" style="left:685px;width:49px;letter-spacing:-0.21px;">33</span>
<div class="cb" style="left:738px">C</div>
</div>
<div class="r" style="top:267px;width:775px">
<span class="x n" style="letter-spacing:-0.34px;">cheekSquint_R</span>
<span class="x ce" style="left:140px;width:49px;letter-spacing:-0.21px;">0</span>
<span class="x ce" style="left:190px;width:49px;letter-spacing:-0.21px;">100</span>
<span class="x ce" style="left:240px;width:49px;letter-spacing:-0.21px;">1</span>
<div class="k" style="left:293px">-</div>
<div class="f" style="left:312px;width:18px"></div>
<div class="pk" style="left:543px"></div>
<span class="x ce" style="left:312px;width:350px;letter-spacing:-0.21px;">5</span>
<div class="k kp" style="left:665px">+</div>
<span class="x ce" style="left:685px;width:49px;letter-spacing:-0.21px;">66</span>
<div class="cb" style="left:738px">C</div>
</div>
<div class="r" style="top:289px;width:775px">
<span class="x n" style="letter-spacing:-0.10px;">mouthUpperUp_R</span>
<span class="x ce" style="left:140px;width:49px;letter-spacing:-0.21px;">0</span>
<span class="x ce" style="left:190px;width:49px;letter-spacing:-0.21px;">100</span>
<span class="x ce" style="left:240px;width:49px;letter-spacing:-0.21px;">1</span>
<div class="k" style="left:293px">-</div>
<div class="f" style="left:312px;width:7px"></div>
<div class="pk" style="left:522px"></div>
<span class="x ce" style="left:312px;width:350px;letter-spacing:-0.21px;">2</span>
<div class="k kp" style="left:665px">+</div>
<span class="x ce" style="left:685px;width:49px;letter-spacing:-0.21px;">60</span>
<div class="cb" style="left:738px">C</div>
</div>
<div class="r" style="top:311px;width:775px">
<span class="x n" style="letter-spacing:-0.06px;">mouthDimple_R</span>
<span class="x ce" style="left:140px;width:49px;letter-spacing:-0.21px;">0</span>
<span class="x ce" style="left:190px;width:49px;letter-spacing:-0.21px;">100</span>
<span class="x ce" style="left:240px;width:49px;letter-spacing:-0.21px;">1</span>
<div class="k" style="left:293px">-</div>
<div class="f" style="left:312px;width:7px"></div>
<div class="pk" style="left:378px"></div>
<span class="x ce" style="left:312px;width:350px;letter-spacing:-0.21px;">2</span>
<div class="k kp" style="left:665px">+</div>
<span class="x ce" style="left:685px;width:49px;letter-spacing:-0.21px;">19</span>
<div class="cb" style="left:738px">C</div>
</div>
<div class="r" style="top:333px;width:775px">
<span class="x n" style="letter-spacing:-0.19px;">mouthFrown_R</span>
<span class="x ce" style="left:140px;width:49px;letter-spacing:-0.21px;">0</span>
<span class="x ce" style="left:190px;width:49px;letter-spacing:-0.21px;">100</span>
<span class="x ce" style="left:240px;width:49px;letter-spacing:-0.34px;">2.34</span>
<div class="k" style="left:293px">-</div>
<div class="pk" style="left:448px"></div>
<span class="x ce" style="left:312px;width:350px;letter-spacing:-0.21px;">0</span>
<div class="k kp" style="left:665px">+</div>
<span class="x ce" style="left:685px;width:49px;letter-spacing:-0.21px;">39</span>
<div class="cb" style="left:738px">C</div>
</div>
<div class="r" style="top:355px;width:775px">
<span class="x n" style="letter-spacing:-0.21px;">mouthSmile_R</span>
<span class="x ce" style="left:140px;width:49px;letter-spacing:-0.21px;">0</span>
<span class="x ce" style="left:190px;width:49px;letter-spacing:-0.21px;">100</span>
<span class="x ce" style="left:240px;width:49px;letter-spacing:-0.38px;">1.5</span>
<div class="k" style="left:293px">-</div>
<div class="pk" style="left:661px"></div>
<span class="x ce" style="left:312px;width:350px;letter-spacing:-0.21px;">0</span>
<div class="k kp" style="left:665px">+</div>
<span class="x ce" style="left:685px;width:49px;letter-spacing:-0.21px;">100</span>
<div class="cb" style="left:738px">C</div>
</div>
<div class="r" style="top:377px;width:775px">
<span class="x n" style="letter-spacing:-0.40px;">mouthPress_R</span>
<span class="x ce" style="left:140px;width:49px;letter-spacing:-0.21px;">0</span>
<span class="x ce" style="left:190px;width:49px;letter-spacing:-0.21px;">100</span>
<span class="x ce" style="left:240px;width:49px;letter-spacing:-0.21px;">1</span>
<div class="k" style="left:293px">-</div>
<div class="f" style="left:312px;width:4px"></div>
<div class="pk" style="left:354px"></div>
<span class="x ce" style="left:312px;width:350px;letter-spacing:-0.21px;">1</span>
<div class="k kp" style="left:665px">+</div>
<span class="x ce" style="left:685px;width:49px;letter-spacing:-0.21px;">12</span>
<div class="cb" style="left:738px">C</div>
</div>
<div class="r" style="top:399px;width:775px">
<span class="x n" style="letter-spacing:-0.15px;">mouthStretch_R</span>
<span class="x ce" style="left:140px;width:49px;letter-spacing:-0.21px;">0</span>
<span class="x ce" style="left:190px;width:49px;letter-spacing:-0.21px;">100</span>
<span class="x ce" style="left:240px;width:49px;letter-spacing:-0.21px;">1</span>
<div class="k" style="left:293px">-</div>
<div class="f" style="left:312px;width:14px"></div>
<div class="pk" style="left:606px"></div>
<span class="x ce" style="left:312px;width:350px;letter-spacing:-0.21px;">4</span>
<div class="k kp" style="left:665px">+</div>
<span class="x ce" style="left:685px;width:49px;letter-spacing:-0.21px;">84</span>
<div class="cb" style="left:738px">C</div>
</div>
<div class="r" style="top:421px;width:775px">
<span class="x n" style="letter-spacing:-0.13px;">mouthLowerDown_R</span>
<span class="x ce" style="left:140px;width:49px;letter-spacing:-0.21px;">0</span>
<span class="x ce" style="left:190px;width:49px;letter-spacing:-0.21px;">100</span>
<span class="x ce" style="left:240px;width:49px;letter-spacing:-0.38px;">1.5</span>
<div class="k" style="left:293px">-</div>
<div class="f" style="left:312px;width:46px"></div>
<div class="pk" style="left:661px"></div>
<span class="x ce" style="left:312px;width:350px;letter-spacing:-0.21px;">13</span>
<div class="k kp" style="left:665px">+</div>
<span class="x ce" style="left:685px;width:49px;letter-spacing:-0.21px;">100</span>
<div class="cb" style="left:738px">C</div>
</div>
<div class="hl" style="top:24px;width:775px"></div>
<div class="cl" style="left:139px;height:443px"></div>
<div class="cl" style="left:189px;height:443px"></div>
<div class="cl" style="left:239px;height:443px"></div>
<div class="cl" style="left:289px;height:443px"></div>
<div class="cl" style="left:684px;height:443px"></div>
<div class="cl" style="left:734px;height:443px"></div>
<div class="cl" style="left:774px;height:443px"></div>
</div>
<div class="tb" style="left:1116px;top:574px;width:799px;height:496px">
<span class="x" style="left:8px;top:5px;letter-spacing:-0.25px;">Left Blend Shapes</span>
<span class="x" style="left:148px;top:5px;letter-spacing:0.38px;">Min</span>
<span class="x" style="left:198px;top:5px;letter-spacing:-0.09px;">Max</span>
<span class="x" style="left:248px;top:5px;letter-spacing:0.23px;">Mult.</span>
<span class="x" style="left:298px;top:5px;letter-spacing:-0.21px;">Visualiser</span>
<span class="x" style="left:698px;top:5px;letter-spacing:-0.57px;">Peak</span>
<div class="r sel" style="top:25px;width:780px">
<span class="x n" style="letter-spacing:-0.15px;">browInnerUp_L</span>
<span class="x ce" style="left:140px;width:49px;letter-spacing:-0.21px;">0</span>
<span class="x ce" style="left:190px;width:49px;letter-spacing:-0.21px;">100</span>
<span class="x ce" style="left:240px;width:49px;letter-spacing:-0.21px;">1</span>
<div class="k" style="left:293px">-</div>
<div class="pk" style="left:312px"></div>
<span class="x ce" style="left:312px;width:355px;letter-spacing:-0.21px;">0</span>
<div class="k kp" style="left:670px">+</div>
<span class="x ce" style="left:690px;width:49px;letter-spacing:-0.21px;">0</span>
<div class="cb" style="left:743px">C</div>
</div>
<div class="r" style="top:47px;width:780px">
<span class="x n" style="letter-spacing:-0.12px;">browOuterUp_L</span>
<span class="x ce" style="left:140px;width:49px;letter-spacing:-0.21px;">0</span>
<span class="x ce" style="left:190px;width:49px;letter-spacing:-0.21px;">100</span>
<span class="x ce" style="left:240px;width:49px;letter-spacing:-0.21px;">1</span>
<div class="k" style="left:293px">-</div>
<div class="f" style="left:312px;width:28px"></div>
<div class="pk" style="left:390px"></div>
<span class="x ce" style="left:312px;width:355px;letter-spacing:-0.21px;">8</span>
<div class="k kp" style="left:670px">+</div>
<span class="x ce" style="left:690px;width:49px;letter-spacing:-0.21px;">22</span>
<div class="cb" style="left:743px">C</div>
</div>
<div class="r" style="top:69px;width:780px">
<span class="x n" style="letter-spacing:-0.16px;">browDown_L</span>
<span class="x ce" style="left:140px;width:49px;letter-spacing:-0.21px;">0</span>
<span class="x ce" style="left:190px;width:49px;letter-spacing:-0.21px;">100</span>
<span class="x ce" style="left:240px;width:49px;letter-spacing:-0.38px;">1.3</span>
<div class="k" style="left:293px">-</div>
<div class="pk" style="left:666px"></div>
<span class="x ce" style="left:312px;width:355px;letter-spacing:-0.21px;">0</span>
<div class="k kp" style="left:670px">+</div>
<span class="x ce" style="left:690px;width:49px;letter-spacing:-0.21px;">100</span>
<div class="cb" style="left:743px">C</div>
</div>
<div class="r" style="top:91px;width:780px">
<span class="x n" style="letter-spacing:-0.38px;">eyeLookUp_L</span>
<span class="x ce" style="left:140px;width:49px;letter-spacing:-0.21px;">0</span>
<span class="x ce" style="left:190px;width:49px;letter-spacing:-0.21px;">100</span>
<span class="x ce" style="left:240px;width:49px;letter-spacing:-0.21px;">1</span>
<div class="k" style="left:293px">-</div>
<div class="pk" style="left:624px"></div>
<span class="x ce" style="left:312px;width:355px;letter-spacing:-0.21px;">0</span>
<div class="k kp" style="left:670px">+</div>
<span class="x ce" style="left:690px;width:49px;letter-spacing:-0.21px;">88</span>
<div class="cb" style="left:743px">C</div>
</div>
<div class="r" style="top:113px;width:780px">
<span class="x n" style="letter-spacing:-0.30px;">eyeLookOut_L</span>
<span class="x ce" style="left:140px;width:49px;letter-spacing:-0.21px;">0</span>
<span class="x ce" style="left:190px;width:49px;letter-spacing:-0.21px;">100</span>
<span class="x ce" style="left:240px;width:49px;letter-spacing:-0.21px;">1</span>
<div class="k" style="left:293px">-</div>
<div class="f" style="left:312px;width:39px"></div>
<div class="pk" style="left:656px"></div>
<span class="x ce" style="left:312px;width:355px;letter-spacing:0.24px;">11</span>
<div class="k kp" style="left:670px">+</div>
<span class="x ce" style="left:690px;width:49px;letter-spacing:-0.21px;">97</span>
<div class="cb" style="left:743px">C</div>
</div>
<div class="r" style="top:135px;width:780px">
<span class="x n" style="letter-spacing:-0.38px;">eyeLookIn_L</span>
<span class="x ce" style="left:140px;width:49px;letter-spacing:-0.21px;">0</span>
<span class="x ce" style="left:190px;width:49px;letter-spacing:-0.21px;">100</span>
<span class="x ce" style="left:240px;width:49px;letter-spacing:-0.21px;">1</span>
<div class="k" style="left:293px">-</div>
<div class="f" style="left:312px;width:4px"></div>
<div class="pk" style="left:546px"></div>
<span class="x ce" style="left:312px;width:355px;letter-spacing:-0.21px;">1</span>
<div class="k kp" style="left:670px">+</div>
<span class="x ce" style="left:690px;width:49px;letter-spacing:-0.21px;">66</span>
<div class="cb" style="left:743px">C</div>
</div>
<div class="r" style="top:157px;width:780px">
<span class="x n" style="letter-spacing:-0.30px;">eyeLookDown_L</span>
<span class="x ce" style="left:140px;width:49px;letter-spacing:-0.21px;">0</span>
<span class="x ce" style="left:190px;width:49px;letter-spacing:-0.21px;">100</span>
<span class="x ce" style="left:240px;width:49px;letter-spacing:-0.38px;">1.2</span>
<div class="k" style="left:293px">-</div>
<div class="f" style="left:312px;width:64px"></div>
<div class="pk" style="left:666px"></div>
<span class="x ce" style="left:312px;width:355px;letter-spacing:-0.21px;">18</span>
<div class="k kp" style="left:670px">+</div>
<span class="x ce" style="left:690px;width:49px;letter-spacing:-0.21px;">100</span>
<div class="cb" style="left:743px">C</div>
</div>
<div class="r" style="top:179px;width:780px">
<span class="x n" style="letter-spacing:-0.43px;">eyeBlink_L</span>
<span class="x ce" style="left:140px;width:49px;letter-spacing:-0.21px;">0</span>
<span class="x ce" style="left:190px;width:49px;letter-spacing:-0.21px;">100</span>
<span class="x ce" style="left:240px;width:49px;letter-spacing:-0.38px;">1.5</span>
<div class="k" style="left:293px">-</div>
<div class="pk" style="left:666px"></div>
<span class="x ce" style="left:312px;width:355px;letter-spacing:-0.21px;">0</span>
<div class="k kp" style="left:670px">+</div>
<span class="x ce" style="left:690px;width:49px;letter-spacing:-0.21px;">100</span>
<div class="cb" style="left:743px">C</div>
</div>
<div class="r" style="top:201px;width:780px">
<span class="x n" style="letter-spacing:-0.35px;">eyeSquint_L</span>
<span class="x ce" style="left:140px;width:49px;letter-spacing:-0.21px;">0</span>
<span class="x ce" style="left:190px;width:49px;letter-spacing:-0.21px;">100</span>
<span class="x ce" style="left:240px;width:49px;letter-spacing:-0.21px;">1</span>
<div class="k" style="left:293px">-</div>
<div class="f" style="left:312px;width:14px"></div>
<div class="pk" style="left:546px"></div>
<span class="x ce" style="left:312px;width:355px;letter-spacing:-0.21px;">4</span>
<div class="k kp" style="left:670px">+</div>
<span class="x ce" style="left:690px;width:49px;letter-spacing:-0.21px;">66</span>
<div class="cb" style="left:743px">C</div>
</div>
<div class="r" style="top:223px;width:780px">
<span class="x n" style="letter-spacing:-0.40px;">eyeWide_L</span>
<span class="x ce" style="left:140px;width:49px;letter-spacing:-0.21px;">0</span>
<span class="x ce" style="left:190px;width:49px;letter-spacing:-0.21px;">100</span>
<span class="x ce" style="left:240px;width:49px;letter-spacing:-0.38px;">1.2</span>
<div class="k" style="left:293px">-</div>
<div class="pk" style="left:666px"></div>
<span class="x ce" style="left:312px;width:355px;letter-spacing:-0.21px;">0</span>
<div class="k kp" style="left:670px">+</div>
<span class="x ce" style="left:690px;width:49px;letter-spacing:-0.21px;">100</span>
<div class="cb" style="left:743px">C</div>
</div>
<div class="r" style="top:245px;width:780px">
<span class="x n" style="letter-spacing:-0.52px;">noseSneer_L</span>
<span class="x ce" style="left:140px;width:49px;letter-spacing:-0.21px;">0</span>
<span class="x ce" style="left:190px;width:49px;letter-spacing:-0.21px;">100</span>
<span class="x ce" style="left:240px;width:49px;letter-spacing:-0.21px;">1</span>
<div class="k" style="left:293px">-</div>
<div class="pk" style="left:351px"></div>
<span class="x ce" style="left:312px;width:355px;letter-spacing:-0.21px;">0</span>
<div class="k kp" style="left:670px">+</div>
<span class="x ce" style="left:690px;width:49px;letter-spacing:0.24px;">11</span>
<div class="cb" style="left:743px">C</div>
</div>
<div class="r" style="top:267px;width:780px">
<span class="x n" style="letter-spacing:-0.30px;">cheekSquint_L</span>
<span class="x ce" style="left:140px;width:49px;letter-spacing:-0.21px;">0</span>
<span class="x ce" style="left:190px;width:49px;letter-spacing:-0.21px;">100</span>
<span class="x ce" style="left:240px;width:49px;letter-spacing:-0.21px;">1</span>
<div class="k" style="left:293px">-</div>
<div class="f" style="left:312px;width:7px"></div>
<div class="pk" style="left:414px"></div>
<span class="x ce" style="left:312px;width:355px;letter-spacing:-0.21px;">2</span>
<div class="k kp" style="left:670px">+</div>
<span class="x ce" style="left:690px;width:49px;letter-spacing:-0.21px;">29</span>
<div class="cb" style="left:743px">C</div>
</div>
<div class="r" style="top:289px;width:780px">
<span class="x n" style="letter-spacing:-0.06px;">mouthUpperUp_L</span>
<span class="x ce" style="left:140px;width:49px;letter-spacing:-0.21px;">0</span>
<span class="x ce" style="left:190px;width:49px;letter-spacing:-0.21px;">100</span>
<span class="x ce" style="left:240px;width:49px;letter-spacing:-0.21px;">1</span>
<div class="k" style="left:293px">-</div>
<div class="f" style="left:312px;width:14px"></div>
<div class="pk" style="left:588px"></div>
<span class="x ce" style="left:312px;width:355px;letter-spacing:-0.21px;">4</span>
<div class="k kp" style="left:670px">+</div>
<span class="x ce" style="left:690px;width:49px;letter-spacing:-0.21px;">78</span>
<div class="cb" style="left:743px">C</div>
</div>
<div class="r" style="top:311px;width:780px">
<span class="x n" style="letter-spacing:-0.03px;">mouthDimple_L</span>
<span class="x ce" style="left:140px;width:49px;letter-spacing:-0.21px;">0</span>
<span class="x ce" style="left:190px;width:49px;letter-spacing:-0.21px;">100</span>
<span class="x ce" style="left:240px;width:49px;letter-spacing:-0.21px;">1</span>
<div class="k" style="left:293px">-</div>
<div class="f" style="left:312px;width:7px"></div>
<div class="pk" style="left:393px"></div>
<span class="x ce" style="left:312px;width:355px;letter-spacing:-0.21px;">2</span>
<div class="k kp" style="left:670px">+</div>
<span class="x ce" style="left:690px;width:49px;letter-spacing:-0.21px;">23</span>
<div class="cb" style="left:743px">C</div>
</div>
<div class="r" style="top:333px;width:780px">
<span class="x n" style="letter-spacing:-0.15px;">mouthFrown_L</span>
<span class="x ce" style="left:140px;width:49px;letter-spacing:-0.21px;">0</span>
<span class="x ce" style="left:190px;width:49px;letter-spacing:-0.21px;">100</span>
<span class="x ce" style="left:240px;width:49px;letter-spacing:-0.34px;">2.34</span>
<div class="k" style="left:293px">-</div>
<div class="pk" style="left:418px"></div>
<span class="x ce" style="left:312px;width:355px;letter-spacing:-0.21px;">0</span>
<div class="k kp" style="left:670px">+</div>
<span class="x ce" style="left:690px;width:49px;letter-spacing:-0.21px;">30</span>
<div class="cb" style="left:743px">C</div>
</div>
<div class="r" style="top:355px;width:780px">
<span class="x n" style="letter-spacing:-0.17px;">mouthSmile_L</span>
<span class="x ce" style="left:140px;width:49px;letter-spacing:-0.21px;">0</span>
<span class="x ce" style="left:190px;width:49px;letter-spacing:-0.21px;">100</span>
<span class="x ce" style="left:240px;width:49px;letter-spacing:-0.38px;">1.5</span>
<div class="k" style="left:293px">-</div>
<div class="f" style="left:312px;width:4px"></div>
<div class="pk" style="left:666px"></div>
<span class="x ce" style="left:312px;width:355px;letter-spacing:-0.21px;">1</span>
<div class="k kp" style="left:670px">+</div>
<span class="x ce" style="left:690px;width:49px;letter-spacing:-0.21px;">100</span>
<div class="cb" style="left:743px">C</div>
</div>
<div class="r" style="top:377px;width:780px">
<span class="x n" style="letter-spacing:-0.36px;">mouthPress_L</span>
<span class="x ce" style="left:140px;width:49px;letter-spacing:-0.21px;">0</span>
<span class="x ce" style="left:190px;width:49px;letter-spacing:-0.21px;">100</span>
<span class="x ce" style="left:240px;width:49px;letter-spacing:-0.21px;">1</span>
<div class="k" style="left:293px">-</div>
<div class="f" style="left:312px;width:4px"></div>
<div class="pk" style="left:340px"></div>
<span class="x ce" style="left:312px;width:355px;letter-spacing:-0.21px;">1</span>
<div class="k kp" style="left:670px">+</div>
<span class="x ce" style="left:690px;width:49px;letter-spacing:-0.21px;">8</span>
<div class="cb" style="left:743px">C</div>
</div>
<div class="r" style="top:399px;width:780px">
<span class="x n" style="letter-spacing:-0.12px;">mouthStretch_L</span>
<span class="x ce" style="left:140px;width:49px;letter-spacing:-0.21px;">0</span>
<span class="x ce" style="left:190px;width:49px;letter-spacing:-0.21px;">100</span>
<span class="x ce" style="left:240px;width:49px;letter-spacing:-0.21px;">1</span>
<div class="k" style="left:293px">-</div>
<div class="f" style="left:312px;width:18px"></div>
<div class="pk" style="left:493px"></div>
<span class="x ce" style="left:312px;width:355px;letter-spacing:-0.21px;">5</span>
<div class="k kp" style="left:670px">+</div>
<span class="x ce" style="left:690px;width:49px;letter-spacing:-0.21px;">51</span>
<div class="cb" style="left:743px">C</div>
</div>
<div class="r" style="top:421px;width:780px">
<span class="x n" style="letter-spacing:-0.10px;">mouthLowerDown_L</span>
<span class="x ce" style="left:140px;width:49px;letter-spacing:-0.21px;">0</span>
<span class="x ce" style="left:190px;width:49px;letter-spacing:-0.21px;">100</span>
<span class="x ce" style="left:240px;width:49px;letter-spacing:-0.38px;">1.5</span>
<div class="k" style="left:293px">-</div>
<div class="f" style="left:312px;width:85px"></div>
<div class="pk" style="left:666px"></div>
<span class="x ce" style="left:312px;width:355px;letter-spacing:-0.21px;">24</span>
<div class="k kp" style="left:670px">+</div>
<span class="x ce" style="left:690px;width:49px;letter-spacing:-0.21px;">100</span>
<div class="cb" style="left:743px">C</div>
</div>
<div class="hl" style="top:24px;width:780px"></div>
<div class="cl" style="left:139px;height:25px"></div>
<div class="cl" style="left:139px;top:46px;height:397px"></div>
<div class="cl" style="left:189px;height:25px"></div>
<div class="cl" style="left:189px;top:46px;height:397px"></div>
<div class="cl" style="left:239px;height:25px"></div>
<div class="cl" style="left:239px;top:46px;height:397px"></div>
<div class="cl" style="left:289px;height:25px"></div>
<div class="cl" style="left:289px;top:46px;height:397px"></div>
<div class="cl" style="left:689px;height:25px"></div>
<div class="cl" style="left:689px;top:46px;height:397px"></div>
<div class="cl" style="left:739px;height:25px"></div>
<div class="cl" style="left:739px;top:46px;height:397px"></div>
<div class="cl" style="left:779px;height:25px"></div>
<div class="cl" style="left:779px;top:46px;height:397px"></div>
</div>
<span class="x" style="left:1071px;width:300px;text-align:center;top:159.5px;letter-spacing:-0.10px;">Right Eye Direction</span>
<svg style="left:1145px;top:179px" width="152" height="152" viewBox="-76 -76 152 152" fill="none"><path d="M-75 0H75M0 -75V75" stroke="#b3adad" stroke-width="1.4"/><circle r="50" stroke="#d8d3d3" stroke-width="1"/><circle cx="15" cy="8" r="5" fill="#6cb5ea"/></svg>
<span class="x" style="left:1655px;width:300px;text-align:center;top:159.5px;letter-spacing:-0.12px;">Left Eye Direction</span>
<svg style="left:1729px;top:179px" width="152" height="152" viewBox="-76 -76 152 152" fill="none"><path d="M-75 0H75M0 -75V75" stroke="#b3adad" stroke-width="1.4"/><circle r="50" stroke="#d8d3d3" stroke-width="1"/><circle cx="8.5" cy="8" r="5" fill="#6cb5ea"/></svg>
<span class="x" style="left:1363px;width:300px;text-align:center;top:364.0px;letter-spacing:-0.16px;">Face Direction</span>
<svg style="left:1437px;top:383.5px" width="152" height="152" viewBox="-76 -76 152 152" fill="none"><path d="M-75 0H75M0 -75V75" stroke="#b3adad" stroke-width="1.4"/><circle r="50" stroke="#d8d3d3" stroke-width="1"/><circle cx="-15.5" cy="10.5" r="5" fill="#6cb5ea"/></svg>
</div>
</body></html>
